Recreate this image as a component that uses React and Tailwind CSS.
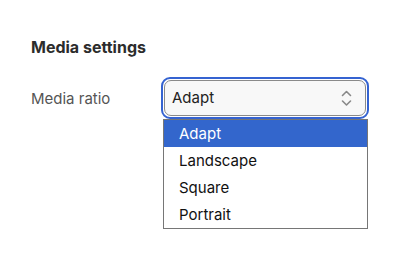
import React from 'react';

const options = ['Adapt', 'Landscape', 'Square', 'Portrait'];

export default function App() {
  return (
    <div className="w-[417px] h-[263px] bg-white pl-[31px] pt-[36px] font-['Inter',sans-serif]">
      <h2 className="text-[16px] font-bold text-[#2c2c2c] leading-[22px]">Media settings</h2>
      <div className="flex items-start mt-[19px]">
        <label className="w-[130px] pt-[11px] text-[15px] text-[#555] leading-[22px]">Media ratio</label>
        <div className="relative w-[208px]">
          <div className="h-[42px] rounded-[9px] border-2 border-[#3563d1] p-px">
            <div className="h-full rounded-[7px] border border-[#8a8a8a] bg-[#f8f8f8] flex items-center justify-between pl-[7px] pr-[13px]">
              <span className="text-[15px] text-[#222]">Adapt</span>
              <svg width="11" height="17" viewBox="0 0 11 17" fill="none" stroke="#888" strokeWidth="1.6" strokeLinecap="round" strokeLinejoin="round">
                <path d="M1.5 5.5 L5.5 1.5 L9.5 5.5" />
                <path d="M1.5 11 L5.5 15 L9.5 11" />
              </svg>
            </div>
          </div>
          <ul className="absolute left-[2px] top-[42px] w-[205px] border border-[#767676] bg-white">
            {options.map((o, i) => (
              <li
                key={o}
                className={`h-[27px] flex items-center pl-[15px] pt-[2px] text-[15px] ${
                  i === 0 ? 'bg-[#3366cc] text-white' : 'text-[#111]'
                }`}
              >
                {o}
              </li>
            ))}
          </ul>
        </div>
      </div>
    </div>
  );
}
